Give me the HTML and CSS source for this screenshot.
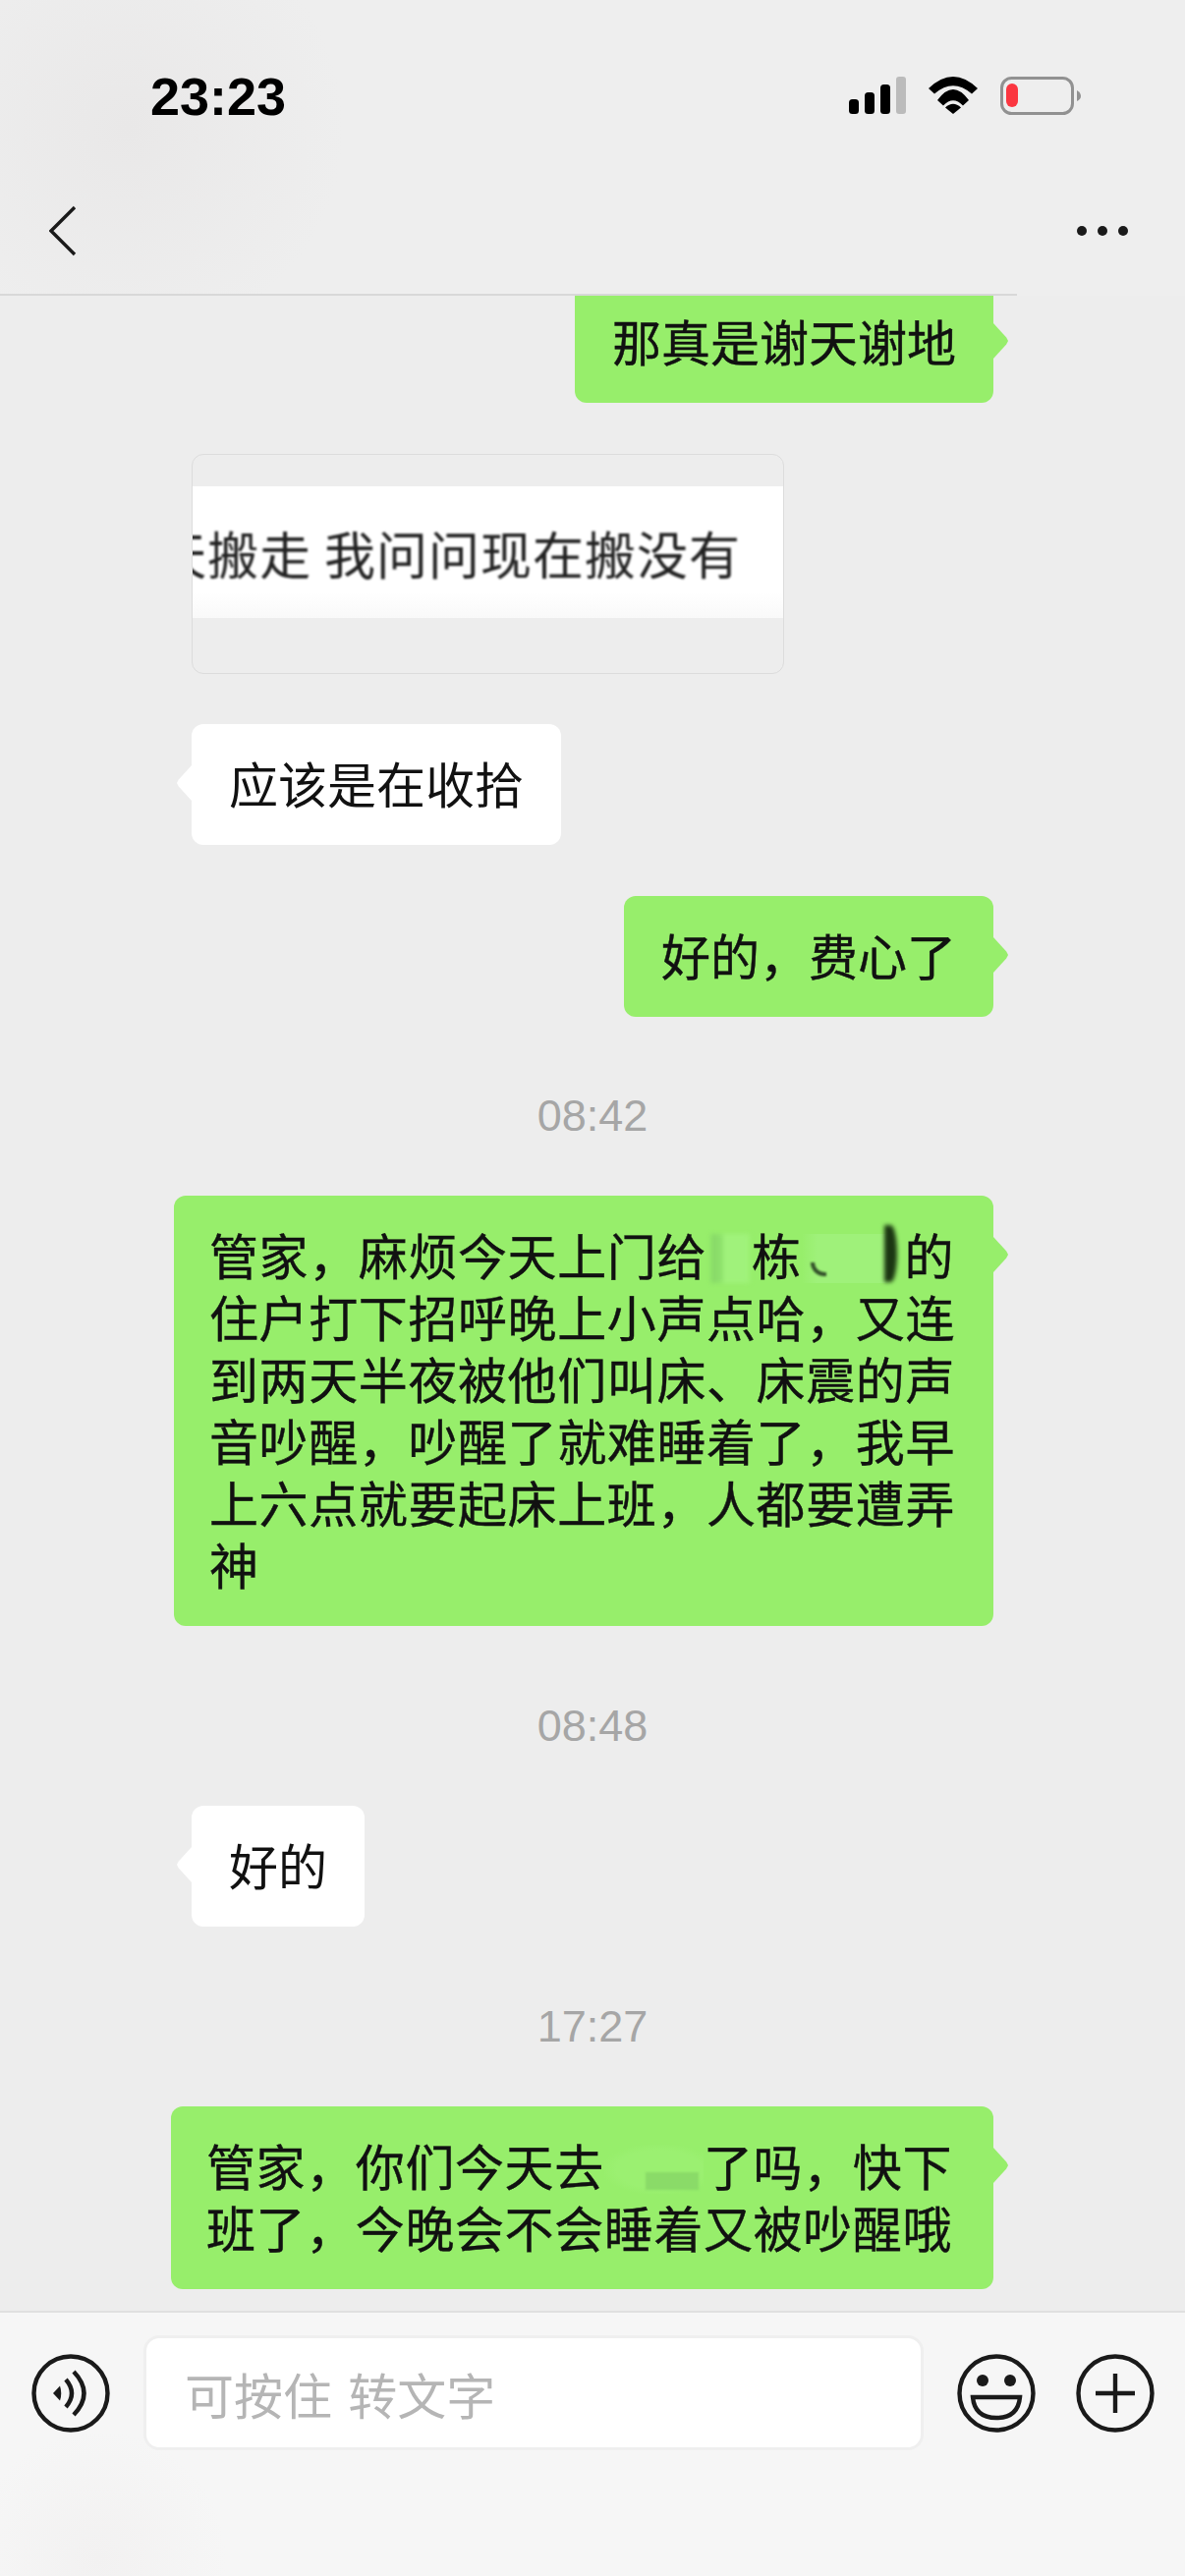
FILE: index.html
```html
<!DOCTYPE html>
<html>
<head>
    <title>Chat</title>
    <link rel="stylesheet" href="styles.css">
</head>
<body>
    <div class="phone">
        <div class="status-bar">
            <div class="clock">23:23</div>
            <div class="status-icons">
                <svg width="58" height="38" viewBox="0 0 58 38">
                    <rect x="0" y="23" width="10" height="15" rx="3.5"/>
                    <rect x="16" y="16" width="10" height="22" rx="3.5"/>
                    <rect x="32" y="8" width="10" height="30" rx="3.5"/>
                    <rect x="48" y="0" width="10" height="38" rx="3" fill="#bbb"/>
                </svg>
                <svg width="50" height="38" viewBox="0 0 50 38">
                    <path d="M0 12 Q25 -12 50 12 L44 17.5 Q25 1 6 17.5 Z"/>
                    <path d="M9 24 Q25 2 41 24 L35 29.5 Q25 19 15 29.5 Z"/>
                    <path d="M17 31.5 Q25 24 33 31.5 L25 38 Z"/>
                </svg>
                <svg width="82" height="40" viewBox="0 0 82 40">
                    <rect x="1.5" y="1.5" width="72" height="36" rx="10" fill="none" stroke="#919191" stroke-width="3"/>
                    <rect x="6" y="7" width="12" height="24" rx="6" fill="#fb3640"/>
                    <path d="M78 14 Q82 16 82 20 Q82 23 78 25 Z" fill="#919191"/>
                </svg>
            </div>
        </div>

        <div class="nav-bar">
            <svg width="28" height="52" viewBox="0 0 28 52">
                <path d="M26 2 L2 26 L26 50" fill="none" stroke="#1a1a1a" stroke-width="3.4"/>
            </svg>
            <svg width="52" height="10" viewBox="0 0 52 10" fill="#1a1a1a">
                <circle cx="5" cy="5" r="5"/>
                <circle cx="26" cy="5" r="5"/>
                <circle cx="47" cy="5" r="5"/>
            </svg>
        </div>
        <div class="nav-line"></div>

        <div class="chat">
            <div class="row out">
                <div class="bubble green clipped">那真是谢天谢地</div>
            </div>
            <div class="row in gap-52">
                <div class="quote-card">
                    <div class="quote-strip"><span class="quote-text">天搬走 我问问现在搬没有</span></div>
                </div>
            </div>
            <div class="row in gap-51">
                <div class="bubble white">应该是在收拾</div>
            </div>
            <div class="row out gap-52">
                <div class="bubble green">好的，费心了</div>
            </div>

            <div class="time tight">08:42</div>
            <div class="row out">
                <div class="bubble green long">管家，麻烦今天上门给<span class="smudge smudge-left"></span>栋<span class="smudge smudge-wide"><i class="smudge-arc"></i><i class="smudge-dark"></i></span>的<br>住户打下招呼晚上小声点哈，又连<br>到两天半夜被他们叫床、床震的声<br>音吵醒，吵醒了就难睡着了，我早<br>上六点就要起床上班，人都要遭弄<br>神</div>
            </div>

            <div class="time">08:48</div>
            <div class="row in">
                <div class="bubble white">好的</div>
            </div>

            <div class="time">17:27</div>
            <div class="row out">
                <div class="bubble green long wide">管家，你们今天去<span class="smudge smudge-patch"><i class="smudge-bar"></i></span>了吗，快下<br>班了，今晚会不会睡着又被吵醒哦</div>
            </div>
        </div>

        <div class="composer">
            <svg class="round-icon" width="80" height="80" viewBox="0 0 80 80">
                <circle cx="40" cy="40" r="37.5" fill="none" stroke="#1a1a1a" stroke-width="4.4"/>
                <path d="M22 40 L29 32.5 Q31.5 40 29 47.5 Z" fill="#1a1a1a"/>
                <path d="M35 26 Q47 40 35 54" fill="none" stroke="#1a1a1a" stroke-width="4.4"/>
                <path d="M43 18 Q64 40 43 62" fill="none" stroke="#1a1a1a" stroke-width="4.4"/>
            </svg>
            <div class="input-box">可按住 转文字</div>
            <svg class="round-icon" width="80" height="80" viewBox="0 0 80 80">
                <circle cx="40" cy="40" r="37.5" fill="none" stroke="#1a1a1a" stroke-width="4.4"/>
                <circle cx="26" cy="27" r="6" fill="#1a1a1a"/>
                <circle cx="54" cy="27" r="6" fill="#1a1a1a"/>
                <path d="M16 44 H64 Q62 65 40 65 Q18 65 16 44 Z" fill="none" stroke="#1a1a1a" stroke-width="4.4"/>
            </svg>
            <svg class="round-icon plus" width="80" height="80" viewBox="0 0 80 80">
                <circle cx="40" cy="40" r="37.5" fill="none" stroke="#1a1a1a" stroke-width="4.4"/>
                <path d="M20 40 H60 M40 20 V60" fill="none" stroke="#1a1a1a" stroke-width="4.4"/>
            </svg>
        </div>
    </div>
</body>
</html>
```

FILE: styles.css
```css
body {
    margin: 0;
    background: #ededed;
    font-family: "Noto Sans CJK SC", "Liberation Sans", sans-serif;
    color: #111;
}

.phone {
    width: 1206px;
    height: 2622px;
    display: flex;
    flex-direction: column;
    overflow: hidden;
    background: radial-gradient(circle at 130px 130px, #e9e8e8 0, #eeeeee 220px);
}

/* status bar */
.status-bar {
    height: 170px;
    box-sizing: border-box;
    padding: 78px 106px 0 153px;
    display: flex;
    justify-content: space-between;
    align-items: flex-start;
}
.clock {
    font-family: "Liberation Sans", sans-serif;
    font-weight: 700;
    font-size: 54px;
    line-height: 40px;
    color: #000;
}
.status-icons {
    display: flex;
    align-items: flex-start;
    gap: 23px;
}
.status-icons svg {
    display: block;
}

/* nav */
.nav-bar {
    height: 129px;
    box-sizing: border-box;
    padding: 0 58px 0 50px;
    display: flex;
    justify-content: space-between;
    align-items: center;
}
.nav-line {
    width: 1035px;
    height: 2px;
    background: #d8d8d8;
}

/* messages */
.chat {
    flex: 1;
    background: #ededed;
    overflow: hidden;
}
.row {
    display: flex;
}
.row.out {
    justify-content: flex-end;
    padding-right: 195px;
}
.row.in {
    justify-content: flex-start;
    padding-left: 195px;
}
.gap-52 {
    margin-top: 52px;
}
.gap-51 {
    margin-top: 51px;
}

.bubble {
    position: relative;
    box-sizing: border-box;
    padding: 28px 38px 32px;
    border-radius: 12px;
    font-size: 50px;
    line-height: 63px;
    white-space: nowrap;
}
.bubble::after {
    content: "";
    position: absolute;
    top: 42px;
    width: 15px;
    height: 36px;
}
.bubble.green {
    background: #97ee6b;
    -webkit-text-stroke: 0.4px #111;
}
.bubble.green::after {
    right: -15px;
    background: #97ee6b;
    clip-path: polygon(0 0, 88% 40%, 100% 50%, 88% 60%, 0 100%);
}
.bubble.white {
    background: #fff;
}
.bubble.white::after {
    left: -15px;
    background: #fff;
    clip-path: polygon(100% 0, 12% 40%, 0 50%, 12% 60%, 100% 100%);
}
.bubble.clipped {
    padding-top: 14px;
    border-radius: 0 0 12px 12px;
}
.bubble.clipped::after {
    top: 28px;
}
.bubble.long {
    padding-left: 36px;
    padding-right: 39px;
    letter-spacing: 0.6px;
}
.bubble.wide {
    padding-right: 42px;
}

.time {
    margin: 77px 0 56px;
    font-family: "Liberation Sans", sans-serif;
    font-size: 45px;
    line-height: 50px;
    text-align: center;
    color: #a6a6a6;
}
.time.tight {
    margin-top: 76px;
}

/* forwarded picture */
.quote-card {
    box-sizing: border-box;
    width: 603px;
    height: 224px;
    padding-top: 32px;
    border: 1px solid #dcdcdc;
    border-radius: 12px;
    overflow: hidden;
}
.quote-strip {
    height: 134px;
    padding-right: 43px;
    display: flex;
    justify-content: flex-end;
    align-items: center;
    overflow: hidden;
    background: linear-gradient(#fff 80%, #f9f9f9);
}
.quote-text {
    font-size: 52px;
    letter-spacing: 1px;
    white-space: nowrap;
    color: #222;
    filter: blur(0.9px);
}

/* blurred out names */
.smudge {
    position: relative;
    display: inline-block;
    height: 50px;
    vertical-align: -8px;
}
.smudge i {
    position: absolute;
    display: block;
}
.smudge-left {
    width: 46px;
    background: linear-gradient(90deg, transparent 7%, #86d768 14%, #8fe36c 34%, #a0f27b 40%, #a0f27b 90%, transparent);
    filter: blur(2px);
}
.smudge-wide {
    width: 105px;
    background: linear-gradient(90deg, transparent, #9ff17a 15%, #9ff17a 80%, transparent 87%);
}
.smudge-arc {
    left: 9px;
    top: 29px;
    width: 16px;
    height: 14px;
    border-left: 4px solid #33502a;
    border-bottom: 4px solid #33502a;
    border-radius: 0 0 0 14px;
    box-sizing: border-box;
    filter: blur(1px);
}
.smudge-dark {
    left: 84px;
    top: -9px;
    width: 13px;
    height: 58px;
    border-radius: 0 50% 50% 0;
    background: #1b3612;
    filter: blur(2px);
}
.smudge-patch {
    width: 101.2px;
    background: radial-gradient(ellipse at 55% 50%, #9bf071 55%, transparent 75%);
}
.smudge-bar {
    left: 42px;
    top: 28px;
    width: 54px;
    height: 18px;
    background: #8adb68;
    filter: blur(1px);
}

/* bottom bar */
.composer {
    height: 270px;
    box-sizing: border-box;
    padding: 23px 32px 0;
    display: flex;
    align-items: flex-start;
    gap: 34px;
    border-top: 2px solid #e0e0e0;
    background: radial-gradient(circle at 100px 250px, #f2f1f1 0, #f6f6f6 130px);
}
.round-icon {
    display: block;
    flex: none;
    margin-top: 19px;
}
.round-icon.plus {
    margin-left: 7px;
}
.input-box {
    box-sizing: border-box;
    flex: none;
    width: 794px;
    height: 117px;
    padding-left: 39px;
    display: flex;
    align-items: center;
    border: 3px solid #efefef;
    border-radius: 16px;
    background: #fff;
    font-size: 50px;
    word-spacing: 5px;
    color: #b5b5b5;
    white-space: pre;
}
```
